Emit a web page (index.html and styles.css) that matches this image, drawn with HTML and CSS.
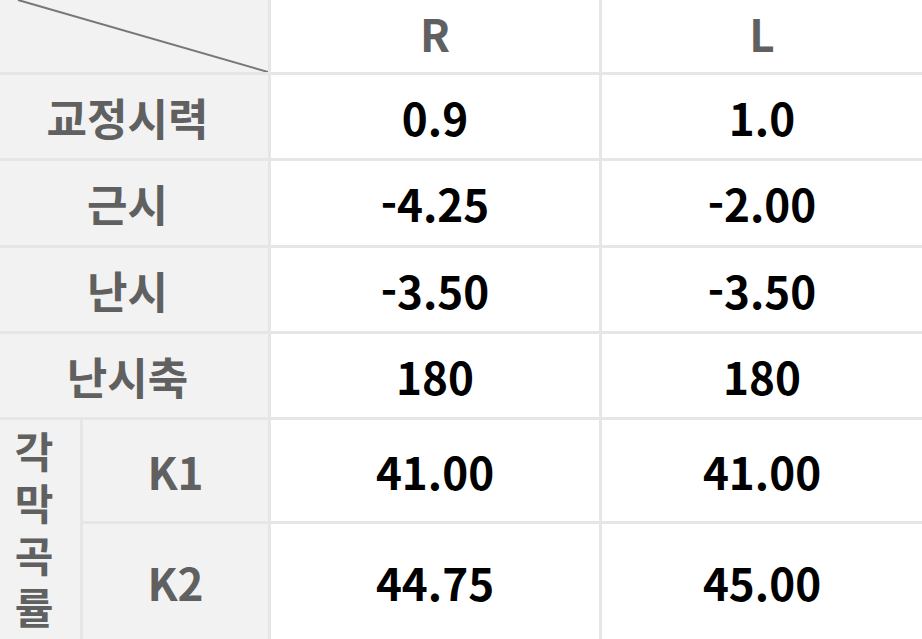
FILE: index.html
```html
<!DOCTYPE html>
<html lang="ko">
<head>
<meta charset="utf-8">
<link rel="stylesheet" href="styles.css">
</head>
<body>
<div class="table">
  <div class="cell head corner">
    <svg class="diag" viewBox="0 0 268 72" preserveAspectRatio="none"><line x1="18" y1="0" x2="268" y2="72" stroke="#777" stroke-width="2"/></svg>
  </div>
  <div class="cell colhead">R</div>
  <div class="cell colhead">L</div>

  <div class="cell head span2">교정시력</div>
  <div class="cell val">0.9</div>
  <div class="cell val">1.0</div>

  <div class="cell head span2">근시</div>
  <div class="cell val">-4.25</div>
  <div class="cell val">-2.00</div>

  <div class="cell head span2">난시</div>
  <div class="cell val">-3.50</div>
  <div class="cell val">-3.50</div>

  <div class="cell head span2">난시축</div>
  <div class="cell val">180</div>
  <div class="cell val">180</div>

  <div class="cell head vert"><span class="vtext">각막곡률</span></div>
  <div class="cell head">K1</div>
  <div class="cell val">41.00</div>
  <div class="cell val">41.00</div>

  <div class="cell head">K2</div>
  <div class="cell val">44.75</div>
  <div class="cell val">45.00</div>
</div>
</body>
</html>
```

FILE: styles.css
```css
html, body {
  margin: 0;
  padding: 0;
  background: #ffffff;
}
body {
  font-family: "Noto Sans CJK KR", "Noto Sans", sans-serif;
  font-weight: 700;
}
.table {
  width: 922px;
  height: 639px;
  display: grid;
  grid-template-columns: 80px 185px 328px 320px;
  grid-template-rows: 72px 83px 84px 83px 83px 101px 115px;
  gap: 3px;
  background: #e6e6e6;
  overflow: hidden;
}
.cell {
  display: flex;
  align-items: center;
  justify-content: center;
  font-size: 44px;
  line-height: 1;
}
.head {
  background: #f2f2f2;
  color: #606060;
}
.colhead {
  background: #ffffff;
  color: #606060;
  padding-bottom: 6px;
}
.val {
  background: #ffffff;
  color: #000000;
}
.span2 {
  grid-column: span 2;
  padding-right: 13px;
}
.corner {
  grid-column: span 2;
  position: relative;
  padding-right: 0;
}
.diag {
  position: absolute;
  left: 0;
  top: 0;
  width: 100%;
  height: 100%;
}
.vert {
  grid-row: span 2;
  align-items: flex-start;
  padding-top: 11px;
  padding-right: 13px;
}
.vtext {
  writing-mode: vertical-rl;
  text-orientation: upright;
  white-space: nowrap;
  font-size: 42px;
  line-height: 46px;
  letter-spacing: 10px;
}
```
